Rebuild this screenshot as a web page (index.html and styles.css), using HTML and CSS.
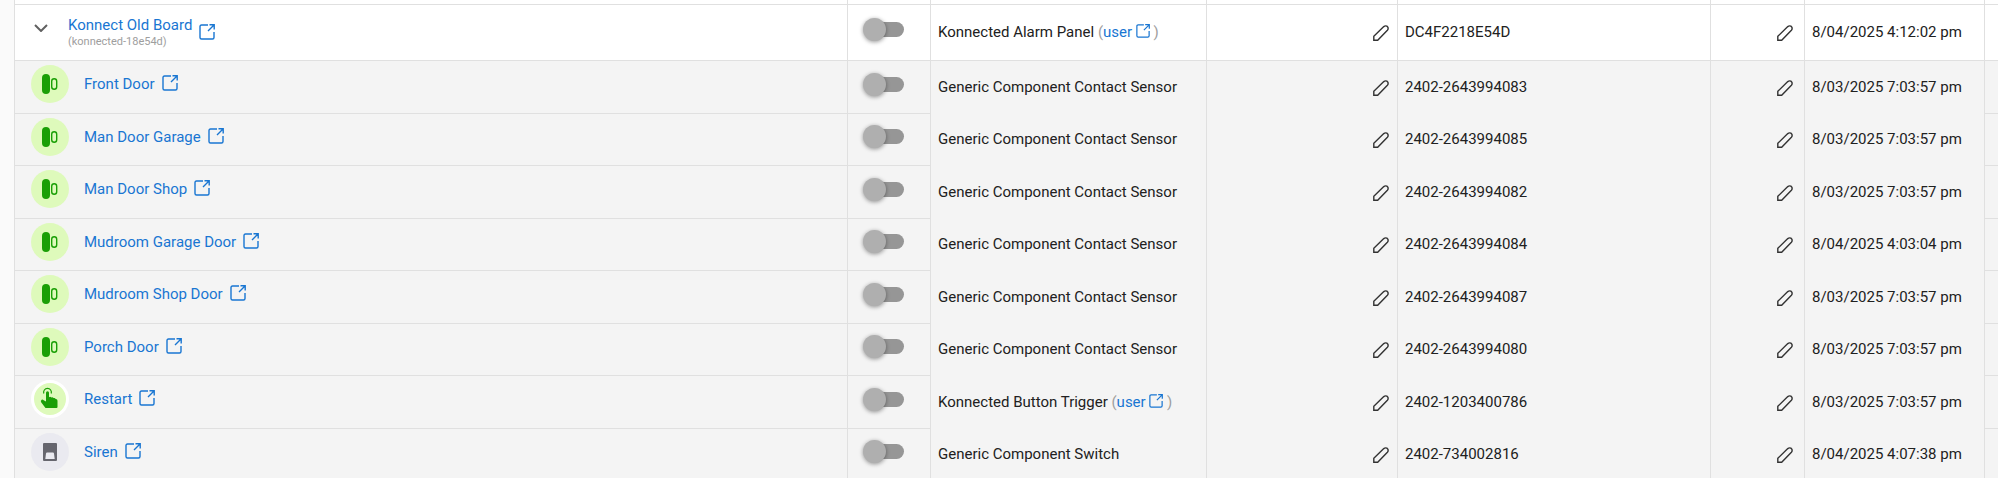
FILE: index.html
```
<!DOCTYPE html>
<html lang="en">
<head>
    <meta charset="UTF-8">
    <title>Devices</title>
    <link rel="stylesheet" href="styles.css">
</head>
<body>
<svg class="sprite" aria-hidden="true">
    <symbol id="external" viewBox="0 0 16 16"><path d="M9 1H2.500Q1 1 1 2.500V13.500Q1 15 2.500 15H13.500Q15 15 15 13.500V8M10.500 .8H15.200V5.500M15 1L9 7"/></symbol>
    <symbol id="pencil" viewBox="0 0 16 16"><path d="M.8 15.200V11.300L10.800 1.600Q12.200 .4 13.900 1.200L14.800 2.100Q15.600 3.800 14.400 5.200L4.700 15.200Z"/></symbol>
    <symbol id="chevron" viewBox="0 0 14 8"><path d="M1 1L7 7L13 1"/></symbol>
    <symbol id="contact" viewBox="0 0 38 38"><rect x="11" y="9" width="8" height="20" rx="4"/><rect x="20.700" y="13.700" width="5" height="10.600" rx="2.500" fill="none" stroke="currentColor" stroke-width="1.400"/></symbol>
    <symbol id="tap" viewBox="0 0 38 38"><path d="M15 21.500V12.700a1.500 1.500 0 0 1 3 0V17.200q1.200-.8 2.400 .3q1.300-.6 2.200 .6q1.600-.4 2 .9q1.900-.2 1.900 1.700V27q0 1-1 1H14.500L10.300 22.500q-1.200-1.800 .4-2.800q1-.4 2 .5z"/><path d="M12.800 13.500a3.900 3.900 0 1 1 7.400 0" fill="none" stroke="currentColor" stroke-width="1.200"/></symbol>
    <symbol id="switch" viewBox="0 0 38 38"><path fill-rule="evenodd" d="M13 10h12q1 0 1 1v16q0 1-1 1H13q-1 0-1-1V11q0-1 1-1zM16 19.500q-.8 0-1 1L14.300 26H23.700L23 20.500q-.2-1-1-1z"/></symbol>
</svg>
<table class="devices">
    <colgroup>
        <col><col class="col-toggle"><col class="col-type"><col class="col-label"><col class="col-dni"><col class="col-room"><col class="col-date"><col class="col-more">
    </colgroup>
    <tbody id="device-rows">
        <tr class="spacer"><td></td><td></td><td></td><td></td><td></td><td></td><td></td><td></td></tr>
    </tbody>
</table>

<script>
const devices = [
    { name: 'Konnect Old Board', sub: '(konnected-18e54d)', type: 'Konnected Alarm Panel', user: true, dni: 'DC4F2218E54D', date: '8/04/2025 4:12:02 pm' },
    { name: 'Front Door', icon: 'contact', type: 'Generic Component Contact Sensor', dni: '2402-2643994083', date: '8/03/2025 7:03:57 pm' },
    { name: 'Man Door Garage', icon: 'contact', type: 'Generic Component Contact Sensor', dni: '2402-2643994085', date: '8/03/2025 7:03:57 pm' },
    { name: 'Man Door Shop', icon: 'contact', type: 'Generic Component Contact Sensor', dni: '2402-2643994082', date: '8/03/2025 7:03:57 pm' },
    { name: 'Mudroom Garage Door', icon: 'contact', type: 'Generic Component Contact Sensor', dni: '2402-2643994084', date: '8/04/2025 4:03:04 pm' },
    { name: 'Mudroom Shop Door', icon: 'contact', type: 'Generic Component Contact Sensor', dni: '2402-2643994087', date: '8/03/2025 7:03:57 pm' },
    { name: 'Porch Door', icon: 'contact', type: 'Generic Component Contact Sensor', dni: '2402-2643994080', date: '8/03/2025 7:03:57 pm' },
    { name: 'Restart', icon: 'tap', type: 'Konnected Button Trigger', user: true, dni: '2402-1203400786', date: '8/03/2025 7:03:57 pm' },
    { name: 'Siren', icon: 'switch', type: 'Generic Component Switch', dni: '2402-734002816', date: '8/04/2025 4:07:38 pm' }
];

const svg = (id, cls) => `<svg class="${cls}" aria-hidden="true"><use href="#${id}"/></svg>`;
const edit = label => `<button type="button" class="edit" aria-label="${label}">${svg('pencil', 'pencil')}</button>`;

document.getElementById('device-rows').innerHTML += devices.map(d => `
    <tr class="${d.icon ? 'child' : 'parent'}">
        <td class="name"><div class="name-box">
            ${d.icon ? `<span class="badge badge-${d.icon}">${svg(d.icon, 'badge-icon')}</span>`
                     : `<button type="button" class="collapse" aria-label="Collapse">${svg('chevron', 'chevron')}</button>`}
            <div><a href="#">${d.name}</a>${d.sub ? `<div class="sub">${d.sub}</div>` : ''}</div>
            <a href="#" class="open" aria-label="Open ${d.name}">${svg('external', 'external')}</a>
        </div></td>
        <td class="toggle-cell"><input type="checkbox" class="toggle" aria-label="Disable ${d.name}"></td>
        <td>${d.type}${d.user ? ` <span class="user">(<a href="#">user ${svg('external', 'external small')}</a> )</span>` : ''}</td>
        <td class="label-cell">${edit('Edit label')}</td>
        <td>${d.dni}</td>
        <td class="room-cell">${edit('Edit room')}</td>
        <td>${d.date}</td>
        <td></td>
    </tr>`).join('');
</script>
</body>
</html>
```

FILE: styles.css
```
body { margin: 0 0 0 14px; font-family: Roboto, sans-serif; font-size: 15px; line-height: 20px; color: #212121; background-color: #fafafa; overflow-x: hidden; }
html { background-color: #fafafa; overflow: hidden; }
a { color: #1976d2; text-decoration: none; }
button { padding: 0; border: none; background: none; cursor: pointer; }
svg { display: block; fill: currentColor; }
.sprite { position: absolute; width: 0; height: 0; }

.devices { width: 100%; table-layout: fixed; border-collapse: separate; border-spacing: 0; }
.col-toggle { width: 83px; }
.col-type { width: 276px; }
.col-label { width: 191px; }
.col-dni { width: 313px; }
.col-room { width: 94px; }
.col-date { width: 180px; }
.col-more { width: 14px; }
td { box-sizing: border-box; padding: 0 0 2px 7px; border-left: 1px solid #e0e0e0; white-space: nowrap; vertical-align: middle; background-color: #fff; }
.spacer td { height: 5px; border-bottom: 1px solid #e0e0e0; }
.parent td { height: 56px; border-bottom: 1px solid #e0e0e0; }
.child td { height: 52px; background-color: #f4f4f4; }
.child:nth-child(odd) td { height: 53px; }
.child .name, .child .toggle-cell, .child td:last-child { border-bottom: 1px solid #e0e0e0; }

.name-box { display: flex; align-items: center; }
.child .name-box { padding: 0 0 4px 9px; }
.badge { width: 38px; height: 38px; margin-right: 15px; border-radius: 50%; color: #1a9f06; background-color: #defabb; }
.badge-icon { width: 38px; height: 38px; }
.badge-tap { box-sizing: border-box; border: 3px solid #fff; }
.badge-tap .badge-icon { margin: -3px; }
.badge-switch { color: #66666e; background-color: #eaeaf0; }
.collapse { width: 14px; margin: 0 20px 8px 12px; color: #616161; }
.chevron { width: 14px; height: 8px; fill: none; stroke: currentColor; stroke-width: 2; }
.sub { font-size: 11px; line-height: 13px; color: #9e9e9e; }
.open { margin-left: 7px; }
.child .open { padding-bottom: 2px; }
.external { width: 16px; height: 16px; fill: none; stroke: currentColor; stroke-width: 1.4; }
.small { display: inline-block; width: 14px; height: 14px; vertical-align: -1px; }
.user { color: #9e9e9e; }

.toggle-cell { padding: 0 0 6px 15px; }
.toggle { position: relative; display: block; appearance: none; width: 41px; height: 23px; margin: 0; cursor: pointer; }
.toggle::before { content: ""; position: absolute; inset: 4px 0 4px 4px; border-radius: 8px; background-color: #969696; }
.toggle::after { content: ""; position: absolute; top: 0; left: 0; width: 23px; height: 23px; border-radius: 50%; background-color: #afafaf; box-shadow: 0 1px 4px rgba(0,0,0,0.4); }

.edit { display: inline-block; vertical-align: middle; color: #333; }
.pencil { width: 16px; height: 16px; fill: none; stroke: currentColor; stroke-width: 1.4; }
.label-cell, .room-cell { text-align: right; }
.label-cell { padding-right: 8px; }
.room-cell { padding-right: 11px; }
```
